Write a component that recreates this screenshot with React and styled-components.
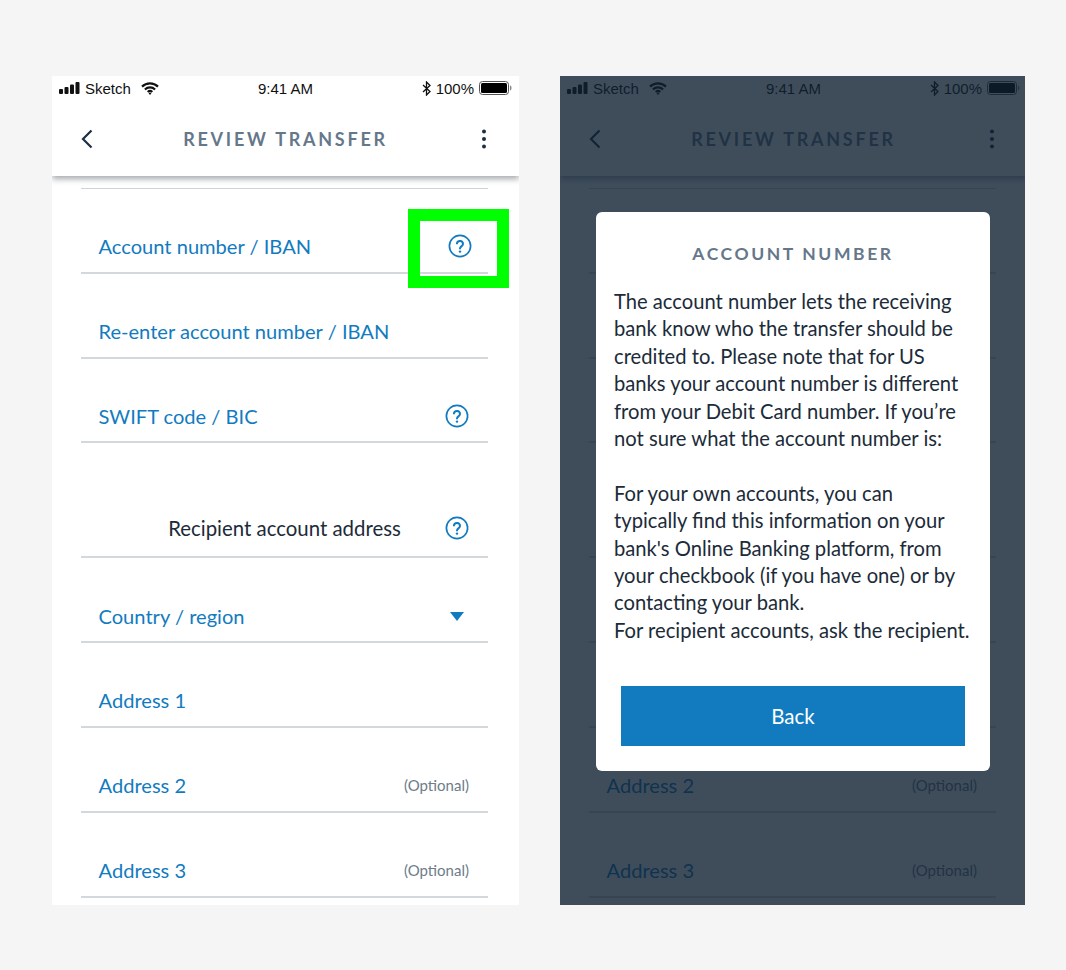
import React from 'react';
import styled, { createGlobalStyle } from 'styled-components';

const Global = createGlobalStyle`
  html, body { margin: 0; padding: 0; background: #f5f5f5; }
  * { box-sizing: border-box; }
`;
const FONT = `"Lato", "Open Sans", sans-serif`;

const Page = styled.div`
  width: 1066px; height: 970px; background: #f5f5f5;
  display: flex; align-items: flex-start; gap: 41px; padding: 76px 0 0 52px; font-family: ${FONT};
`;
const Phone = styled.div`
  position: relative; flex: none; width: ${p => p.$w}px; height: 829px; background: #fff; overflow: hidden;
  display: flex; flex-direction: column;
`;
const TopBar = styled.div`
  position: relative; z-index: 1; flex: none; width: 467px; height: 100px; background: #fff;
  box-shadow: 0 3px 6px rgba(30, 40, 50, 0.4);
  display: flex; flex-direction: column;
`;
const StatusBar = styled.div`
  height: 24px; padding: 0 7px; display: grid; grid-template-columns: 1fr auto 1fr; align-items: center;
  font: 15px "Liberation Sans", Arial, sans-serif; color: #111;
`;
const StatusSide = styled.div`
  display: flex; align-items: center; gap: ${p => p.$gap || 4}px;
  justify-content: ${p => (p.$end ? 'flex-end' : 'flex-start')};
`;
const WifiSlot = styled.span`
  display: flex; margin-left: 6px;
`;
const NavBar = styled.div`
  flex: 1; display: grid; grid-template-columns: 1fr auto 1fr; align-items: center; padding: 6px 32px 4px 29px;
`;
const NavEnd = styled.div`
  display: flex; justify-content: flex-end;
`;
const NavTitle = styled.div`
  margin-left: 3px; font-size: 18px; font-weight: 700; letter-spacing: 2.75px; color: #66778a; text-transform: uppercase;
`;
const Form = styled.div`
  margin: 12px 0 0 29px; width: 407px; border-top: 1px solid #ccd3da; flex: none;
`;
const Field = styled.div`
  height: ${p => p.$h || 84.8}px; border-bottom: 2px solid #d3d8dd;
  display: flex; align-items: flex-end; justify-content: space-between;
  padding: 0 ${p => p.$pr || 19}px ${p => p.$pb || 12.6}px 17.5px;
  position: relative;
`;
const Label = styled.span`
  font-size: 20.1px; line-height: 26px; color: #127bbf; white-space: nowrap;
`;
const SectionLabel = styled.span`
  position: absolute; left: 0; right: 0; bottom: 15px; text-align: center;
  font-size: 20.4px; line-height: 26px; color: #1c2b39;
`;
const Optional = styled.span`
  font-size: 15px; line-height: 26px; color: #6d7c8a;
`;
const Help = styled.svg`
  width: 24px; height: 24px; display: block; flex: none; margin: 0 0 1px auto;
`;
const Caret = styled.svg`
  width: 14px; height: 9px; display: block; margin: 0 5px 8px 0;
`;
const Highlight = styled.div`
  position: absolute; left: 356px; top: 133px; width: 101px; height: 79px; border: 12px solid #00ff00; z-index: 2;
`;
const Overlay = styled.div`
  position: absolute; inset: 0; z-index: 3; background: rgba(15, 32, 50, 0.8);
`;
const Modal = styled.div`
  position: absolute; left: 36px; top: 136px; width: 394px; height: 559px;
  background: #fff; border-radius: 6px; padding: 31px 18px 0; display: flex; flex-direction: column;
`;
const ModalTitle = styled.div`
  text-align: center; font-size: 17.5px; line-height: 22px; font-weight: 700; letter-spacing: 2.6px; color: #66778a;
`;
const ModalBody = styled.div`
  margin-top: 23px; font-size: 20.2px; line-height: 27.4px; color: #1c2b39; white-space: nowrap;
`;
const BackButton = styled.div`
  margin: auto 7px 25px; height: 60px; background: #127bbf; color: #fff;
  display: flex; align-items: center; justify-content: center; font-size: 20.5px;
`;

const HelpIcon = () => (
  <Help viewBox="0 0 24 24" fill="none" stroke="#127bbf">
    <circle cx="12" cy="12" r="10.6" strokeWidth="1.7" />
    <path d="M8.9 9.4a3.1 3.1 0 0 1 6.1.6c0 2.1-3 2.6-3 4.4" strokeWidth="2" strokeLinecap="round" />
    <circle cx="12" cy="17.6" r="1.2" fill="#127bbf" stroke="none" />
  </Help>
);

const Signal = () => (
  <svg width="22" height="12" viewBox="0 0 22 12" fill="#111">
    <rect x="0" y="7" width="4" height="5" rx="1" />
    <rect x="5.5" y="5" width="4" height="7" rx="1" />
    <rect x="11" y="2.5" width="4" height="9.5" rx="1" />
    <rect x="16.5" y="0" width="4" height="12" rx="1" />
  </svg>
);
const Wifi = () => (
  <svg width="18" height="13" viewBox="0 0 18 13" fill="none" stroke="#111" strokeWidth="2.2">
    <path d="M1 4.6a11.5 11.5 0 0 1 16 0" />
    <path d="M3.9 7.5a7.4 7.4 0 0 1 10.2 0" />
    <path d="M6.7 10a3.4 3.4 0 0 1 4.6 0" />
    <path d="M9 12.9l-1.4-1.6a2 2 0 0 1 2.8 0z" fill="#111" stroke="none" />
  </svg>
);
const Bluetooth = () => (
  <svg width="9" height="15" viewBox="0 0 9 15" fill="none" stroke="#111" strokeWidth="1.3">
    <path d="M1 4l7 6.5L4.5 14V1L8 4.5 1 11" />
  </svg>
);
const Battery = () => (
  <svg width="33" height="14" viewBox="0 0 33 14">
    <rect x="0.5" y="0.5" width="29" height="13" rx="3" fill="none" stroke="#555" />
    <rect x="2" y="2" width="26" height="10" rx="1.5" fill="#000" />
    <path d="M31 4.5c1 .3 1.5 1.2 1.5 2.5s-.5 2.2-1.5 2.5z" fill="#888" />
  </svg>
);
const Chevron = () => (
  <svg width="12" height="20" viewBox="0 0 12 20" fill="none" stroke="#1c2f45" strokeWidth="2.2">
    <path d="M10.5 1.5L2 10l8.5 8.5" />
  </svg>
);
const Kebab = () => (
  <svg width="6" height="20" viewBox="0 0 6 20" fill="#1c2f45">
    <circle cx="3" cy="2.5" r="2" />
    <circle cx="3" cy="10" r="2" />
    <circle cx="3" cy="17.5" r="2" />
  </svg>
);

const Screen = ({ width, children }) => (
  <Phone $w={width}>
    <TopBar>
      <StatusBar>
        <StatusSide>
          <Signal />
          <span>Sketch</span>
          <WifiSlot><Wifi /></WifiSlot>
        </StatusSide>
        <span>9:41 AM</span>
        <StatusSide $end $gap={5}>
          <Bluetooth />
          <span>100%</span>
          <Battery />
        </StatusSide>
      </StatusBar>
      <NavBar>
        <Chevron />
        <NavTitle>Review transfer</NavTitle>
        <NavEnd><Kebab /></NavEnd>
      </NavBar>
    </TopBar>
    <Form>
      <Field $pr={16}><Label>Account number / IBAN</Label><HelpIcon /></Field>
      <Field><Label>Re-enter account number / IBAN</Label></Field>
      <Field><Label>SWIFT code / BIC</Label><HelpIcon /></Field>
      <Field $h={115} $pb={15}><SectionLabel>Recipient account address</SectionLabel><HelpIcon /></Field>
      <Field><Label>Country / region</Label><Caret viewBox="0 0 14 9"><path d="M0 0h14L7 9z" fill="#127bbf" /></Caret></Field>
      <Field><Label>Address 1</Label></Field>
      <Field><Label>Address 2</Label><Optional>(Optional)</Optional></Field>
      <Field><Label>Address 3</Label><Optional>(Optional)</Optional></Field>
    </Form>
    {children}
  </Phone>
);

export default function App() {
  return (
    <Page>
      <Global />
      <Screen width={467}><Highlight /></Screen>
      <Screen width={465}>
        <Overlay>
          <Modal>
            <ModalTitle>ACCOUNT NUMBER</ModalTitle>
            <ModalBody>
              The account number lets the receiving<br />
              bank know who the transfer should be<br />
              credited to. Please note that for US<br />
              banks your account number is different<br />
              from your Debit Card number. If you’re<br />
              not sure what the account number is:<br />
              <br />
              For your own accounts, you can<br />
              typically find this information on your<br />
              bank's Online Banking platform, from<br />
              your checkbook (if you have one) or by<br />
              contacting your bank.<br />
              For recipient accounts, ask the recipient.
            </ModalBody>
            <BackButton>Back</BackButton>
          </Modal>
        </Overlay>
      </Screen>
    </Page>
  );
}
